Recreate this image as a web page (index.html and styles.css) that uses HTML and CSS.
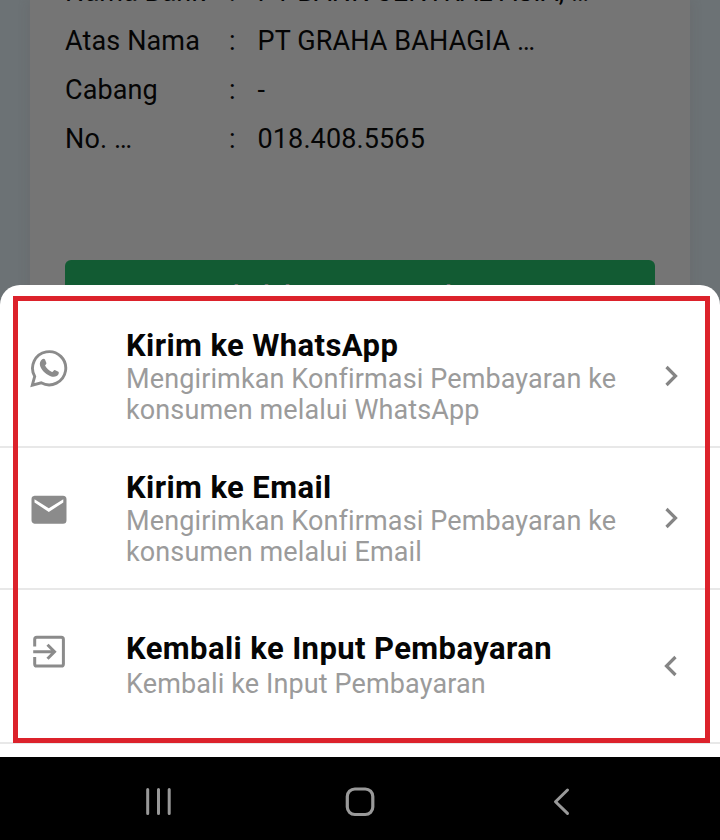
FILE: index.html
```html
<!DOCTYPE html>
<html lang="id">
<head>
<meta charset="utf-8">
<title>Konfirmasi Pembayaran</title>
<link rel="stylesheet" href="styles.css">
</head>
<body>
<main class="screen">
  <section class="page">
    <div class="card">
      <dl class="details">
        <dt>Nama Bank</dt><dd>:</dd><dd>PT BANK CENTRAL ASIA, …</dd>
        <dt>Atas Nama</dt><dd>:</dd><dd>PT GRAHA BAHAGIA …</dd>
        <dt>Cabang</dt><dd>:</dd><dd>-</dd>
        <dt>No. …</dt><dd>:</dd><dd>018.408.5565</dd>
      </dl>
      <div class="button">Kembali ke Input Pembayaran</div>
    </div>
  </section>
  <section class="sheet">
    <div class="item">
      <svg class="icon" viewBox="0 0 40 40"><path d="M3.3 37.2 5.7 28.4A16.6 16.6 0 1 1 12.2 34.8Z" fill="none" stroke="#8b8b8b" stroke-width="2.9"/><path d="M13.2 11.3c.7-.7 2.3-.8 2.8.2l1.4 3.4c.3.9-1.4 2.1-1.400 2.700 1.600 3.100 3.800 5 7 6.400.9.200 1.900-2.200 2.800-2l3.600 1.800c.8.400.3 2.500-.4 3.300-2 2-4.700 2.100-8 .8-5-2-8.900-6.400-10-10.400-.6-2.300.3-4.700 2.200-6.200Z" fill="#8b8b8b"/></svg>
      <div class="text"><h2>Kirim ke WhatsApp</h2><p>Mengirimkan Konfirmasi Pembayaran ke<br>konsumen melalui WhatsApp</p></div>
      <svg class="chevron" viewBox="0 0 24 24"><path d="m7.500 3 9 9-9 9"/></svg>
    </div>
    <div class="item">
      <svg class="icon" viewBox="0 0 40 40"><path fill="#8b8b8b" fill-rule="evenodd" d="M5.500 5.800h28.500a3.500 3.500 0 0 1 3.500 3.500v21a3.500 3.500 0 0 1-3.500 3.500H5.500A3.500 3.500 0 0 1 2.500 30.300v-21a3.500 3.500 0 0 1 3-3.500ZM5.500 9.300v3.200L19.800 22 34.300 12.500V9.300l-14.500 8.900Z"/></svg>
      <div class="text"><h2>Kirim ke Email</h2><p>Mengirimkan Konfirmasi Pembayaran ke<br>konsumen melalui Email</p></div>
      <svg class="chevron" viewBox="0 0 24 24"><path d="m7.500 3 9 9-9 9"/></svg>
    </div>
    <div class="item last">
      <svg class="icon" viewBox="0 0 40 40"><path fill="none" stroke="#8b8b8b" stroke-width="3" d="M5.700 14.400V7.400Q5.700 5.300 7.800 5.300H32.300Q34.400 5.300 34.400 7.400V31.900Q34.400 34 32.300 34H7.800Q5.700 34 5.700 31.900V25M4.200 19.700H25M18.500 12.700 25.500 19.700 18.500 26.700"/></svg>
      <div class="text"><h2>Kembali ke Input Pembayaran</h2><p>Kembali ke Input Pembayaran</p></div>
      <svg class="chevron" viewBox="0 0 24 24"><path d="m16.500 3-9 9 9 9"/></svg>
    </div>
  </section>
  <nav class="nav">
    <svg viewBox="0 0 40 40"><path d="M9.700 9.500v24M20.500 9.500v24M31.200 9.500v24" stroke-width="3"/></svg>
    <svg viewBox="0 0 40 40"><rect x="8.300" y="9" width="25.500" height="25.500" rx="7.500" stroke-width="3.200"/></svg>
    <svg viewBox="0 0 40 40"><path d="M27.500 10 15.500 21.700l12 11.700" stroke-width="3"/></svg>
  </nav>
  <div class="highlight"></div>
</main>
</body>
</html>
```
FILE: styles.css
```css
* { box-sizing: border-box; }
body { margin: 0; font-family: Roboto, "Liberation Sans", sans-serif; }
.screen { position: relative; width: 720px; height: 840px; overflow: hidden; background: #6c7275; display: flex; flex-direction: column; }
.page { height: 285px; flex: none; padding: 0 30px; }
.card { height: 325px; padding: 0 35px; background: #757575; box-shadow: 0 0 10px rgba(100, 96, 98, .4); display: flex; flex-direction: column; }
.details { margin: -32px 0 0; display: grid; grid-template-columns: 164px 28.500px 1fr; grid-auto-rows: 49px; font-size: 27px; line-height: 49px; color: #050505; letter-spacing: .12px; white-space: nowrap; flex: none; }
.details dd { margin: 0; }
.button { margin-top: 96px; height: 100px; flex: none; border-radius: 6px; background: #125b33; color: #777; text-align: center; font-size: 27px; font-weight: 500; line-height: 72px; letter-spacing: .2px; }
.sheet { position: relative; height: 472px; flex: none; background: #fff; border-radius: 20px 20px 0 0; padding-top: 21px; }
.item { height: 142px; border-bottom: 2px solid #e8e8e8; display: flex; padding: 22px 37px 0 29px; }
.item.last { height: 154px; padding-top: 41px; }
.icon { width: 40px; height: 40px; margin-top: 20px; flex: none; }
.last .icon { margin-top: 1px; }
.text { margin-left: 57px; flex: 1; white-space: nowrap; }
h2 { margin: 0; font-size: 31px; line-height: 36px; font-weight: 700; letter-spacing: .4px; color: #050505; }
.text p { margin: 0; font-size: 27px; line-height: 31px; color: #9b9b9b; letter-spacing: .12px; }
.last p { padding-top: 2px; }
.chevron { width: 24px; height: 24px; margin-top: 36px; flex: none; fill: none; stroke: #858585; stroke-width: 3.200; }
.last .chevron { margin-top: 23px; }
.nav { flex: 1; background: #000; display: grid; grid-template-columns: 40px 40px 40px; justify-content: start; column-gap: 161px; padding: 23px 0 0 138px; }
.nav svg { width: 40px; height: 40px; fill: none; stroke: #999; stroke-linecap: round; stroke-linejoin: round; }
.highlight { position: absolute; left: 13px; top: 296px; width: 697px; height: 447px; border: 5px solid #dc222b; }
```
